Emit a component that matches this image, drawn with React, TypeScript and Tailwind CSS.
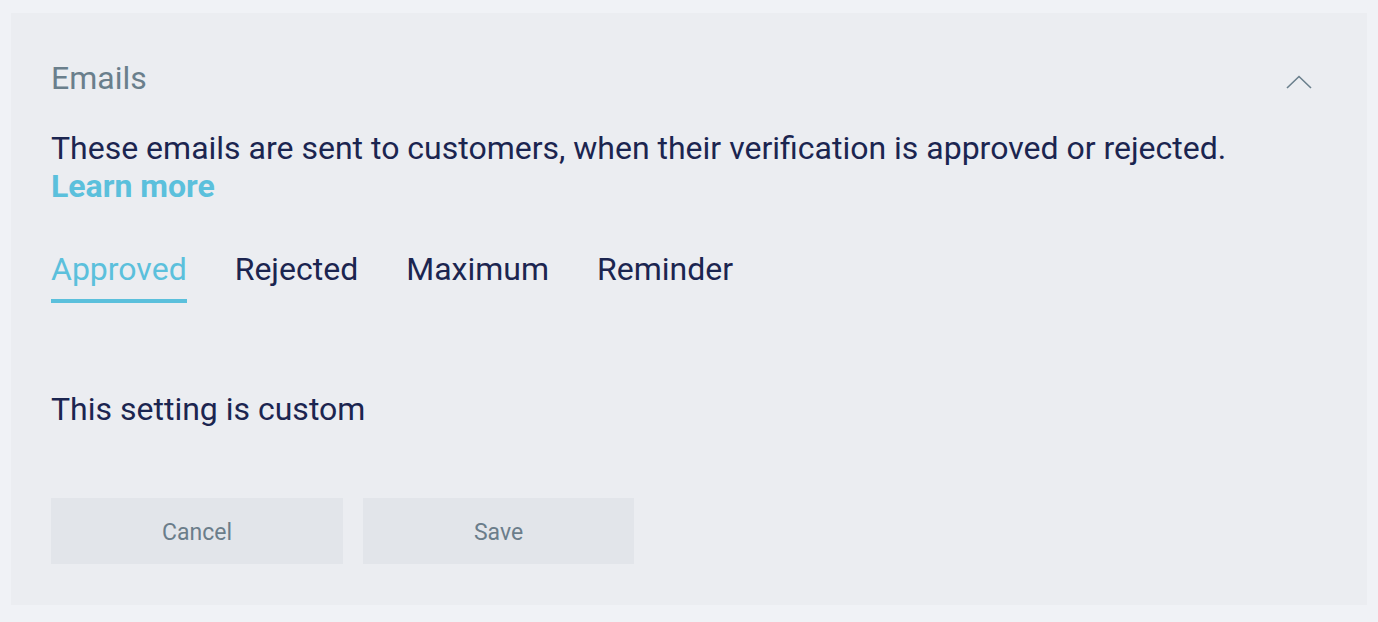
import { useState } from 'react'

const TABS = ['Approved', 'Rejected', 'Maximum', 'Reminder']

export default function App() {
  const [active, setActive] = useState('Approved')

  return (
    <div className="min-h-screen bg-[#f0f2f6] px-[11px] pt-[13px] pb-[17px] font-['Roboto',sans-serif]">
      <section className="bg-[#ebedf1] px-10 pt-[44px] pb-[41px]">
        {/* Header */}
        <div className="flex items-center justify-between">
          <h2 className="text-[32px] leading-[42px] text-[#6a7f8c]">Emails</h2>
          <button className="mr-[15px] mt-2 text-[#6a7f8c]" aria-label="Collapse">
            <svg width="26" height="14" viewBox="0 0 26 14" fill="none">
              <path d="M1 13 L13 1.5 L25 13" stroke="currentColor" strokeWidth="1.6" />
            </svg>
          </button>
        </div>

        <p className="mt-[30px] text-[32px] leading-[38px] text-[#1b2550]">
          These emails are sent to customers, when their verification is approved or rejected.
          <br />
          <a href="#" className="font-bold text-[#5bc0dc]">Learn more</a>
        </p>

        {/* Tabs */}
        <div className="mt-[43px] flex gap-[48px]">
          {TABS.map((tab) => (
            <button
              key={tab}
              onClick={() => setActive(tab)}
              className={`pb-[9px] text-[32px] leading-[42px] border-b-[4px] ${
                active === tab
                  ? 'border-[#5bc0dc] text-[#5bc0dc]'
                  : 'border-transparent text-[#1b2550]'
              }`}
            >
              {tab}
            </button>
          ))}
        </div>

        <p className="mt-[85px] text-[32px] leading-[42px] text-[#1b2550]">This setting is custom</p>

        <div className="mt-[68px] flex gap-5">
          <button className="h-[66px] w-[292px] bg-[#e2e5ea] pt-1 text-[23px] text-[#6b7d8a]">Cancel</button>
          <button className="h-[66px] w-[271px] bg-[#e2e5ea] pt-1 text-[23px] text-[#6b7d8a]">Save</button>
        </div>
      </section>
    </div>
  )
}
